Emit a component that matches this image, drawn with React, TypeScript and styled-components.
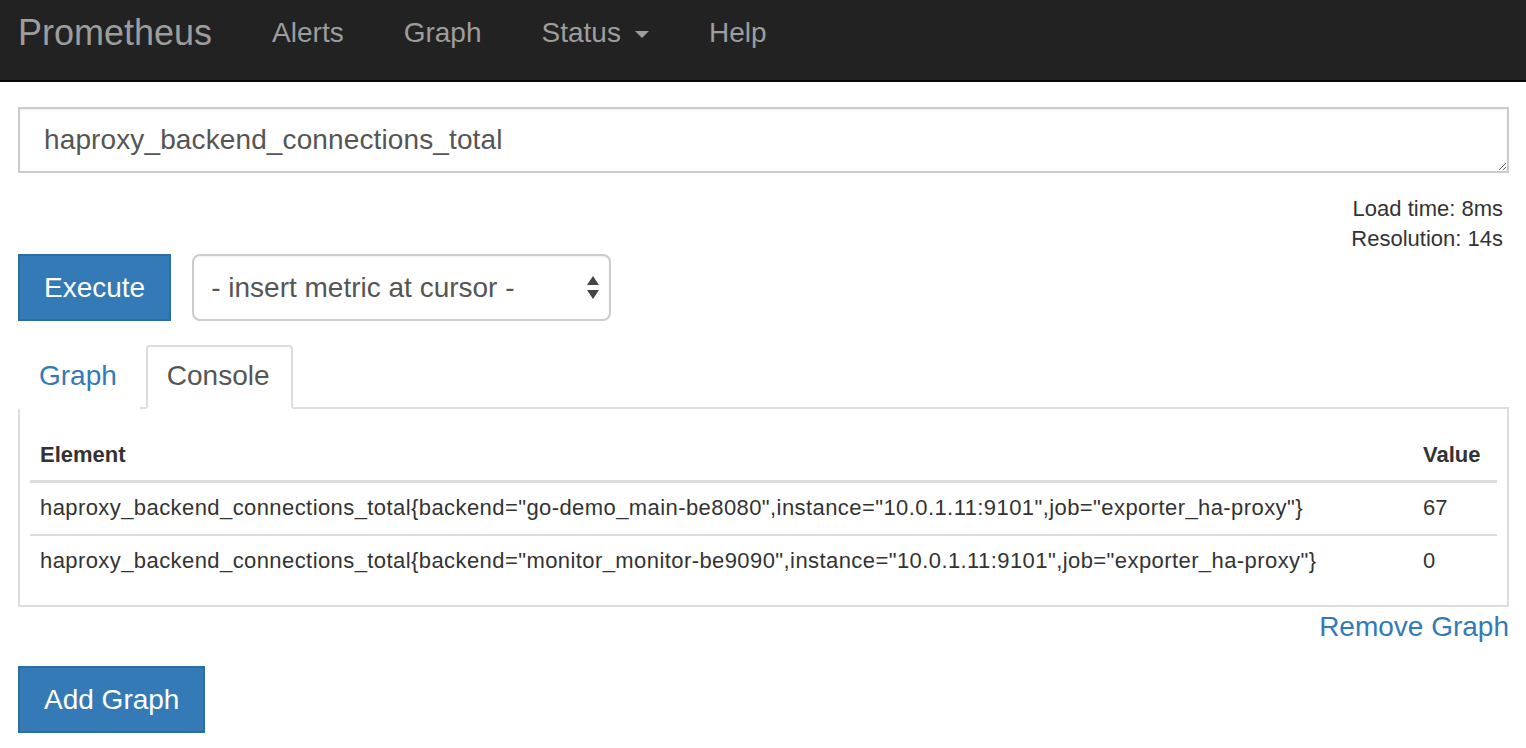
import React from "react";
import styled, { createGlobalStyle } from "styled-components";

const GlobalStyle = createGlobalStyle`
  html, body {
    margin: 0;
    padding: 0;
    background: #ffffff;
  }
  body {
    font-family: "Liberation Sans", Arial, Helvetica, sans-serif;
    font-size: 22px;
    line-height: 1.42857;
    color: #333333;
  }
  * { box-sizing: border-box; }
`;

const Navbar = styled.nav`
  height: 82px;
  background: #222222;
  border-bottom: 2px solid #080808;
  display: flex;
  align-items: flex-start;
  padding-top: 13px;
`;

const Brand = styled.a`
  font-size: 36px;
  line-height: 40px;
  color: #9d9d9d;
  padding: 0 30px 0 18px;
  text-decoration: none;
`;

const NavLinks = styled.ul`
  list-style: none;
  margin: 0;
  padding: 0;
  display: flex;
`;

const NavItem = styled.li`
  font-size: 28px;
  line-height: 40px;
  color: #9d9d9d;
  padding: 0 30px;
  display: flex;
  align-items: center;
`;

const Caret = styled.span`
  display: inline-block;
  width: 0;
  height: 0;
  margin-left: 14px;
  margin-top: 2px;
  border-top: 7px solid #9d9d9d;
  border-left: 7px solid transparent;
  border-right: 7px solid transparent;
`;

const Container = styled.main`
  padding: 25px 17px 0 18px;
`;

const ExprInput = styled.textarea`
  display: block;
  width: 100%;
  height: 66px;
  margin: 0;
  padding: 12px 24px;
  font-family: "Liberation Sans", Arial, Helvetica, sans-serif;
  font-size: 28px;
  line-height: 37px;
  letter-spacing: 0.12px;
  color: #555555;
  border: 2px solid #cccccc;
  border-radius: 0;
  box-shadow: inset 0 1px 2px rgba(0, 0, 0, 0.075);
  resize: vertical;
  outline: none;
  overflow: hidden;
`;

const Stats = styled.div`
  margin-top: 21px;
  padding-right: 6px;
  text-align: right;
  font-size: 22px;
  line-height: 30px;
  color: #333333;
`;

const ControlRow = styled.div`
  display: flex;
  align-items: stretch;
  gap: 21px;
`;

const PrimaryButton = styled.button`
  font-family: "Liberation Sans", Arial, Helvetica, sans-serif;
  font-size: 28px;
  line-height: 37px;
  padding: 13px 24px;
  color: #ffffff;
  background: #337ab7;
  border: 2px solid #2e6da4;
  border-radius: 0;
  cursor: pointer;
`;

const SelectBox = styled.div`
  width: 419px;
  height: 67px;
  border: 2px solid #cccccc;
  border-radius: 8px;
  display: flex;
  align-items: center;
  justify-content: space-between;
  padding: 0 9px 0 17px;
  font-size: 28px;
  color: #555555;
  background: #ffffff;
  box-shadow: inset 0 1px 2px rgba(0, 0, 0, 0.06);
`;

const Tabs = styled.ul`
  list-style: none;
  margin: 24px 0 0 0;
  padding: 0;
  display: flex;
  gap: 6px;
  border-bottom: 2px solid #dddddd;
`;

const Tab = styled.li<{ $active?: boolean }>`
  font-size: 28px;
  line-height: 40px;
  padding: 9px 21px 11px 19px;
  margin-bottom: -2px;
  border: 2px solid ${(p) => (p.$active ? "#dddddd" : "transparent")};
  border-bottom-color: ${(p) => (p.$active ? "#ffffff" : "transparent")};
  border-radius: 4px 4px 0 0;
  background: #ffffff;
  color: ${(p) => (p.$active ? "#555555" : "#337ab7")};
`;

const Panel = styled.section`
  border: 2px solid #dddddd;
  border-top: none;
  padding: 20px 10px 18px 10px;
`;

const Table = styled.table`
  width: 100%;
  border-collapse: collapse;
  border-spacing: 0;
  font-size: 22px;
  line-height: 31px;
`;

const HeadCell = styled.th<{ $narrow?: boolean }>`
  text-align: left;
  font-weight: bold;
  padding: 10px 10px 10px 10px;
  border-bottom: 3px solid #dddddd;
  width: ${(p) => (p.$narrow ? "84px" : "auto")};
  color: #333333;
`;

const Row = styled.tr`
  & + & td {
    border-top: 2px solid #dddddd;
  }
`;

const Cell = styled.td<{ $wide?: boolean }>`
  padding: 9px 10px 11px 10px;
  vertical-align: top;
  white-space: nowrap;
  letter-spacing: ${(p) => (p.$wide ? "0.42px" : "0")};
`;

const RemoveRow = styled.div`
  display: flex;
  justify-content: flex-end;
  font-size: 28px;
  line-height: 40px;
`;

const LinkText = styled.a`
  color: #337ab7;
  text-decoration: none;
`;

const AddRow = styled.div`
  margin-top: 19px;
`;

const SortArrows = () => (
  <svg width="14" height="26" viewBox="0 0 14 26" aria-hidden="true">
    <polygon points="7,1 13,10 1,10" fill="#444" />
    <polygon points="1,15 13,15 7,24" fill="#444" />
  </svg>
);

const rows = [
  {
    metric:
      'haproxy_backend_connections_total{backend="go-demo_main-be8080",instance="10.0.1.11:9101",job="exporter_ha-proxy"}',
    value: "67",
  },
  {
    metric:
      'haproxy_backend_connections_total{backend="monitor_monitor-be9090",instance="10.0.1.11:9101",job="exporter_ha-proxy"}',
    value: "0",
  },
];

export default function App() {
  return (
    <>
      <GlobalStyle />
      <Navbar>
        <Brand>Prometheus</Brand>
        <NavLinks>
          <NavItem>Alerts</NavItem>
          <NavItem>Graph</NavItem>
          <NavItem>
            Status
            <Caret />
          </NavItem>
          <NavItem>Help</NavItem>
        </NavLinks>
      </Navbar>
      <Container>
        <ExprInput defaultValue="haproxy_backend_connections_total" spellCheck={false} />
        <Stats>
          <div>Load time: 8ms</div>
          <div>Resolution: 14s</div>
        </Stats>
        <ControlRow>
          <PrimaryButton>Execute</PrimaryButton>
          <SelectBox>
            <span>- insert metric at cursor -</span>
            <SortArrows />
          </SelectBox>
        </ControlRow>
        <Tabs>
          <Tab>Graph</Tab>
          <Tab $active>Console</Tab>
        </Tabs>
        <Panel>
          <Table>
            <thead>
              <tr>
                <HeadCell>Element</HeadCell>
                <HeadCell $narrow>Value</HeadCell>
              </tr>
            </thead>
            <tbody>
              {rows.map((r) => (
                <Row key={r.metric}>
                  <Cell $wide>{r.metric}</Cell>
                  <Cell>{r.value}</Cell>
                </Row>
              ))}
            </tbody>
          </Table>
        </Panel>
        <RemoveRow>
          <LinkText>Remove Graph</LinkText>
        </RemoveRow>
        <AddRow>
          <PrimaryButton>Add Graph</PrimaryButton>
        </AddRow>
      </Container>
    </>
  );
}
